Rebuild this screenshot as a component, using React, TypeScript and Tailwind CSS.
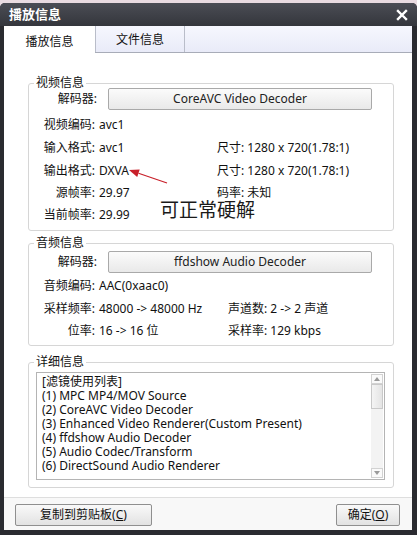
import React from 'react'

const font = { fontFamily: '"Noto Sans", "Noto Sans CJK SC", sans-serif' }

function GroupBox({ title, className, children }: { title: string; className: string; children: React.ReactNode }) {
  return (
    <div className={`relative rounded-[3px] border border-[#d6d6d6] ${className}`}>
      <span className="absolute -top-[8px] left-[5px] bg-white px-[2px] text-[12px] leading-[14px] text-[#111]">
        {title}
      </span>
      {children}
    </div>
  )
}

function DecoderRow({ name }: { name: string }) {
  return (
    <div className="flex h-[22px] items-center">
      <span className="w-[68px] text-right">解码器:</span>
      <div className="ml-[11px] flex h-[22px] w-[264px] items-center justify-center rounded-[2px] border border-[#a9a9a9] bg-gradient-to-b from-[#fbfbfb] to-[#e9e9e9] text-[12px] text-[#222]">
        {name}
      </div>
    </div>
  )
}

function InfoRow({ label, value, right, leftWidth, h }: { label: string; value: string; right?: string; leftWidth: string; h: string }) {
  return (
    <div className={`flex items-center ${h}`}>
      <div className={`flex ${leftWidth}`}>
        <span className="w-[66px] text-right">{label}</span>
        <span className="ml-[4px]">{value}</span>
      </div>
      {right && <span>{right}</span>}
    </div>
  )
}

function Button({ children, className }: { children: React.ReactNode; className: string }) {
  return (
    <div className={`flex h-[22px] items-center justify-center rounded-[2px] border border-[#8f8f8f] bg-gradient-to-b from-[#f9f9f9] to-[#e2e2e2] text-[12px] text-[#111] ${className}`}>
      {children}
    </div>
  )
}

const filters = [
  '[滤镜使用列表]',
  '(1) MPC MP4/MOV Source',
  '(2) CoreAVC Video Decoder',
  '(3) Enhanced Video Renderer(Custom Present)',
  '(4) ffdshow Audio Decoder',
  '(5) Audio Codec/Transform',
  '(6) DirectSound Audio Renderer',
]

export default function App() {
  return (
    <div className="h-[535px] w-[417px] bg-[#e9dbe1] pt-[3px]" style={font}>
      <div className="flex h-[532px] flex-col rounded-t-[5px] bg-[#2a2b30] pb-[5px] pl-[4px] pr-[5px]">
        {/* title bar */}
        <div className="-mx-[4px] -mr-[5px] flex h-[23px] items-center justify-between rounded-t-[5px] bg-gradient-to-b from-[#4b4d55] to-[#34363c] pl-[5px] pr-[3px]">
          <span className="pl-[4px] text-[13px] font-bold text-white">播放信息</span>
          <svg width="12" height="12" viewBox="0 0 12 12" className="mr-[6px]">
            <path d="M2 2 L10 10 M10 2 L2 10" stroke="#ffffff" strokeWidth="2.4" strokeLinecap="square" />
          </svg>
        </div>

        <div className="flex flex-1 flex-col bg-white text-[12px] text-[#111]">
          {/* tabs */}
          <div className="flex h-[27px] border-b border-[#a8acb8] bg-gradient-to-b from-[#f6f7fe] to-[#e9ebf8]">
            <div className="-mb-[1px] flex w-[91px] items-center justify-center bg-white pt-[4px] text-[12px]">播放信息</div>
            <div className="flex w-[90px] items-center justify-center border-x border-[#b9bdc9] pt-[1px] text-[12px]">文件信息</div>
          </div>

          {/* content */}
          <div className="flex flex-1 flex-col pl-[24px] pr-[18px]">
            <GroupBox title="视频信息" className="mt-[30px] h-[148px] pt-[4px]">
              <DecoderRow name="CoreAVC Video Decoder" />
              <div className="mt-[4px]">
                <InfoRow h="h-[22px]" leftWidth="w-[188px]" label="视频编码:" value="avc1" />
                <InfoRow h="h-[23px]" leftWidth="w-[188px]" label="输入格式:" value="avc1" right="尺寸: 1280 x 720(1.78:1)" />
                <InfoRow h="h-[23px]" leftWidth="w-[188px]" label="输出格式:" value="DXVA" right="尺寸: 1280 x 720(1.78:1)" />
                <InfoRow h="h-[22px]" leftWidth="w-[188px]" label="源帧率:" value="29.97" right="码率: 未知" />
                <InfoRow h="h-[22px]" leftWidth="w-[188px]" label="当前帧率:" value="29.99" />
              </div>
              <span className="absolute left-[131px] top-[114px] text-[19px] leading-[24px] text-[#1a1a1a]">可正常硬解</span>
              <svg className="pointer-events-none absolute left-0 top-0" width="360" height="146">
                <line x1="138" y1="99" x2="109.5" y2="89.2" stroke="#c8202a" strokeWidth="1.2" />
                <polygon points="100,86 110.7,85.4 108.2,93" fill="#c8202a" />
              </svg>
            </GroupBox>

            <GroupBox title="音频信息" className="mt-[12px] h-[103px] pt-[7px]">
              <DecoderRow name="ffdshow Audio Decoder" />
              <div className="mt-[2px]">
                <InfoRow h="h-[22px]" leftWidth="w-[199px]" label="音频编码:" value="AAC(0xaac0)" />
                <InfoRow h="h-[23px]" leftWidth="w-[199px]" label="采样频率:" value="48000 -> 48000 Hz" right="声道数: 2 -> 2 声道" />
                <InfoRow h="h-[22px]" leftWidth="w-[199px]" label="位率:" value="16 -> 16 位" right="采样率: 129 kbps" />
              </div>
            </GroupBox>

            <GroupBox title="详细信息" className="mt-[16px] h-[126px] pt-[9px]">
              <div className="ml-[7px] flex h-[108px] w-[349px] border border-[#b4b4b4]">
                <div className="flex-1 pl-[5px] pt-[2px] text-[12px] leading-[14px]">
                  {filters.map((f) => (
                    <div key={f} className="whitespace-nowrap">{f}</div>
                  ))}
                </div>
                <div className="my-[1px] mr-[1px] flex w-[12px] flex-col bg-[#f3f3f3]">
                  <div className="flex h-[10px] items-center justify-center border border-[#d2d2d2] bg-[#fafafa]">
                    <svg width="6" height="4" viewBox="0 0 6 4"><polygon points="3,0 6,4 0,4" fill="#9a9a9a" /></svg>
                  </div>
                  <div className="h-[25px] border border-[#c9c9c9] bg-gradient-to-r from-[#f4f4f4] to-[#e4e4e4]" />
                  <div className="flex-1" />
                  <div className="flex h-[10px] items-center justify-center border border-[#d2d2d2] bg-[#fafafa]">
                    <svg width="6" height="4" viewBox="0 0 6 4"><polygon points="0,0 6,0 3,4" fill="#9a9a9a" /></svg>
                  </div>
                </div>
              </div>
            </GroupBox>
          </div>

          {/* footer */}
          <div className="flex h-[33px] items-start justify-between border-t border-[#dedede] bg-[#f8f8f8] pl-[11px] pr-[12px] pt-[6px]">
            <Button className="w-[137px]">
              复制到剪贴板(<span className="underline">C</span>)
            </Button>
            <Button className="w-[64px]">
              确定(<span className="underline">O</span>)
            </Button>
          </div>
        </div>
      </div>
    </div>
  )
}
